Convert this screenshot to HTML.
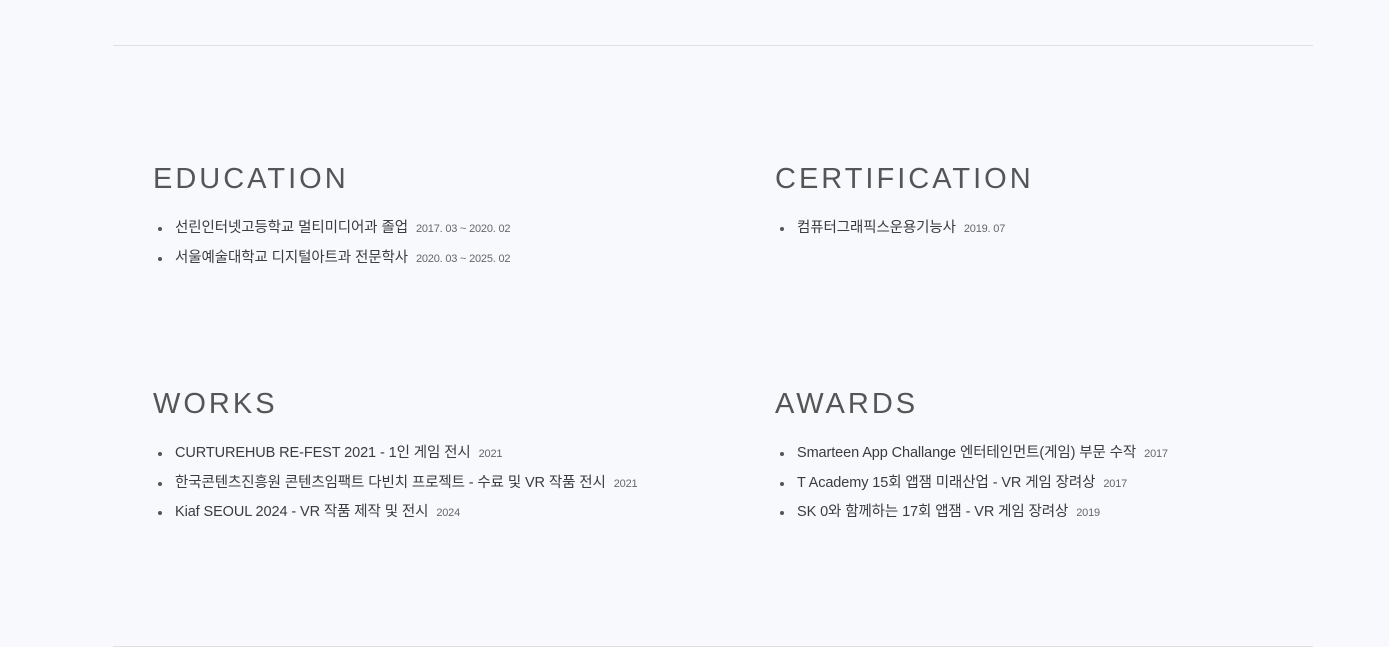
<!DOCTYPE html>
<html><head><meta charset="utf-8"><style>
*{margin:0;padding:0;box-sizing:border-box}
body{width:1389px;height:671px;background:#fff;font-family:"Liberation Sans","Noto Sans CJK KR",sans-serif;position:relative;overflow:hidden}
.bg{position:absolute;left:0;top:0;width:1389px;height:647px;background:#f8f9fd}
.line{position:absolute;left:113px;width:1200px;height:1px;background:#dfe0e5}
.sec{position:absolute}
h2{font-weight:normal;font-size:29px;letter-spacing:3px;color:#555;line-height:30px;margin-bottom:25px;font-family:"Liberation Sans",sans-serif}
ul{list-style:none}
li{position:relative;padding-left:22px;font-size:14.5px;color:#3c3c3c;height:29.5px;line-height:18px;letter-spacing:-0.1px}
li:before{content:"";position:absolute;left:5px;top:8px;width:4px;height:4px;border-radius:50%;background:#555}
li span{font-size:11px;color:#666;margin-left:8px;letter-spacing:-0.2px}
</style></head><body>
<div class="bg"></div>
<div class="line" style="top:45px"></div>
<div class="line" style="top:646px"></div>
<div class="sec" style="left:153px;top:164px"><h2>EDUCATION</h2><ul>
<li>선린인터넷고등학교 멀티미디어과 졸업<span>2017. 03 ~ 2020. 02</span></li>
<li>서울예술대학교 디지털아트과 전문학사<span>2020. 03 ~ 2025. 02</span></li></ul></div>
<div class="sec" style="left:775px;top:164px"><h2>CERTIFICATION</h2><ul>
<li>컴퓨터그래픽스운용기능사<span>2019. 07</span></li></ul></div>
<div class="sec" style="left:153px;top:389px"><h2>WORKS</h2><ul>
<li>CURTUREHUB RE-FEST 2021 - 1인 게임 전시<span>2021</span></li>
<li>한국콘텐츠진흥원 콘텐츠임팩트 다빈치 프로젝트 - 수료 및 VR 작품 전시<span>2021</span></li>
<li>Kiaf SEOUL 2024 - VR 작품 제작 및 전시<span>2024</span></li></ul></div>
<div class="sec" style="left:775px;top:389px"><h2>AWARDS</h2><ul>
<li>Smarteen App Challange 엔터테인먼트(게임) 부문 수작<span>2017</span></li>
<li>T Academy 15회 앱잼 미래산업 - VR 게임 장려상<span>2017</span></li>
<li>SK 0와 함께하는 17회 앱잼 - VR 게임 장려상<span>2019</span></li></ul></div>
</body></html>
